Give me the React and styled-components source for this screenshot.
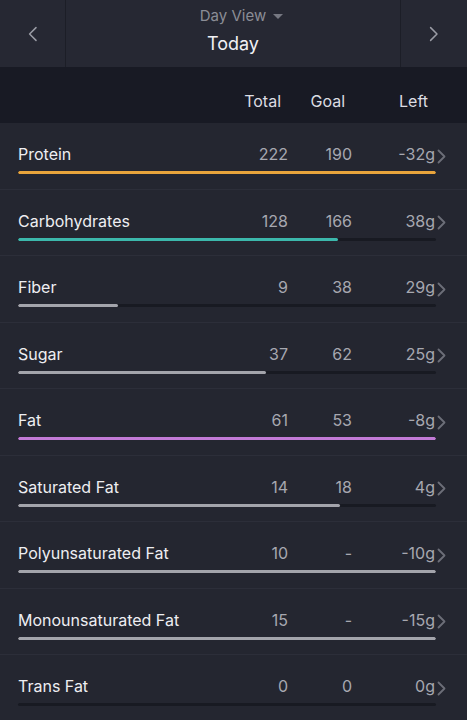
import styled, { createGlobalStyle } from "styled-components";

const GlobalStyle = createGlobalStyle`
  html, body {
    margin: 0;
    padding: 0;
    background: #242630;
  }
  body {
    font-family: Inter, "Open Sans", "Liberation Sans", sans-serif;
    -webkit-font-smoothing: antialiased;
  }
`;

const Page = styled.div`
  width: 467px;
  height: 720px;
  overflow: hidden;
  background: #242630;
`;

const TopBar = styled.div`
  display: grid;
  grid-template-columns: 66px 1fr 67px;
  height: 67px;
  background: #262833;
`;

const NavButton = styled.div`
  display: flex;
  align-items: center;
  justify-content: center;
  border-right: ${(p) => (p.$side === "left" ? "1px solid #1c1e27" : "none")};
  border-left: ${(p) => (p.$side === "right" ? "1px solid #1c1e27" : "none")};
`;

const TitleBlock = styled.div`
  display: flex;
  flex-direction: column;
  align-items: center;
  padding-top: 6px;
`;

const ViewPicker = styled.div`
  display: flex;
  align-items: center;
  gap: 7px;
  color: #8b8d96;
  font-size: 15px;
  line-height: 20px;
  padding-left: 17px;
`;

const Caret = styled.span`
  width: 0;
  height: 0;
  border-left: 5px solid transparent;
  border-right: 5px solid transparent;
  border-top: 5px solid #767882;
`;

const DayTitle = styled.div`
  color: #f1f1f5;
  font-size: 18px;
  line-height: 24px;
  margin-top: 6px;
`;

const ColumnHeader = styled.div`
  display: grid;
  grid-template-columns: 1fr 70px 64px 83px 32px;
  height: 56px;
  align-items: center;
  padding-left: 18px;
  background: #181a24;
  color: #dcdde2;
  font-size: 16px;
  padding-top: 12px;
  box-sizing: border-box;
`;

const HeadCell = styled.div`
  text-align: right;
  padding-right: 7px;
`;

const Row = styled.div`
  height: 66.5px;
  box-sizing: border-box;
  padding-top: 20px;
  border-bottom: 1px solid #2c2e39;
`;

const RowLine = styled.div`
  display: grid;
  grid-template-columns: 1fr 70px 64px 83px 32px;
  align-items: center;
  padding-left: 18px;
  height: 22px;
  font-size: 16px;
`;

const Label = styled.div`
  color: #eeeef2;
`;

const Num = styled.div`
  text-align: right;
  color: #a7a8b0;
`;

const Chevron = styled.div`
  display: flex;
  align-items: center;
  padding-left: 2px;
  padding-top: 4px;
`;

const Track = styled.div`
  margin: 6px 31px 0 18px;
  height: 3px;
  border-radius: 2px;
  background: #181a22;
  overflow: hidden;
`;

const Fill = styled.div`
  height: 100%;
  border-radius: 2px;
  background: ${(p) => p.$color};
`;

const ChevronIcon = ({ dir = "right", size = 15, color = "#6c6e78", width = 1.8 }) => (
  <svg width={size * 0.6} height={size} viewBox="0 0 9 15" fill="none">
    <polyline
      points={dir === "right" ? "1.5,1.5 7.5,7.5 1.5,13.5" : "7.5,1.5 1.5,7.5 7.5,13.5"}
      stroke={color}
      strokeWidth={width}
      strokeLinecap="round"
      strokeLinejoin="round"
    />
  </svg>
);

const nutrients = [
  { name: "Protein", total: "222", goal: "190", left: "-32g", pct: 100, color: "#e8a43c" },
  { name: "Carbohydrates", total: "128", goal: "166", left: "38g", pct: 76.6, color: "#3cb8ac" },
  { name: "Fiber", total: "9", goal: "38", left: "29g", pct: 23.9, color: "#a3a4ab" },
  { name: "Sugar", total: "37", goal: "62", left: "25g", pct: 59.4, color: "#a3a4ab" },
  { name: "Fat", total: "61", goal: "53", left: "-8g", pct: 100, color: "#c27ad6" },
  { name: "Saturated Fat", total: "14", goal: "18", left: "4g", pct: 77, color: "#a3a4ab" },
  { name: "Polyunsaturated Fat", total: "10", goal: "-", left: "-10g", pct: 100, color: "#a3a4ab" },
  { name: "Monounsaturated Fat", total: "15", goal: "-", left: "-15g", pct: 100, color: "#a3a4ab" },
  { name: "Trans Fat", total: "0", goal: "0", left: "0g", pct: 0, color: "#a3a4ab" },
];

export default function App() {
  return (
    <Page>
      <GlobalStyle />
      <TopBar>
        <NavButton $side="left">
          <ChevronIcon dir="left" size={16} color="#9a9ca5" width={1.4} />
        </NavButton>
        <TitleBlock>
          <ViewPicker>
            Day View <Caret />
          </ViewPicker>
          <DayTitle>Today</DayTitle>
        </TitleBlock>
        <NavButton $side="right">
          <ChevronIcon dir="right" size={16} color="#9a9ca5" width={1.4} />
        </NavButton>
      </TopBar>
      <ColumnHeader>
        <div />
        <HeadCell>Total</HeadCell>
        <HeadCell>Goal</HeadCell>
        <HeadCell>Left</HeadCell>
        <div />
      </ColumnHeader>
      {nutrients.map((n) => (
        <Row key={n.name}>
          <RowLine>
            <Label>{n.name}</Label>
            <Num>{n.total}</Num>
            <Num>{n.goal}</Num>
            <Num>{n.left}</Num>
            <Chevron>
              <ChevronIcon />
            </Chevron>
          </RowLine>
          <Track>
            <Fill $color={n.color} style={{ width: `${n.pct}%` }} />
          </Track>
        </Row>
      ))}
    </Page>
  );
}
